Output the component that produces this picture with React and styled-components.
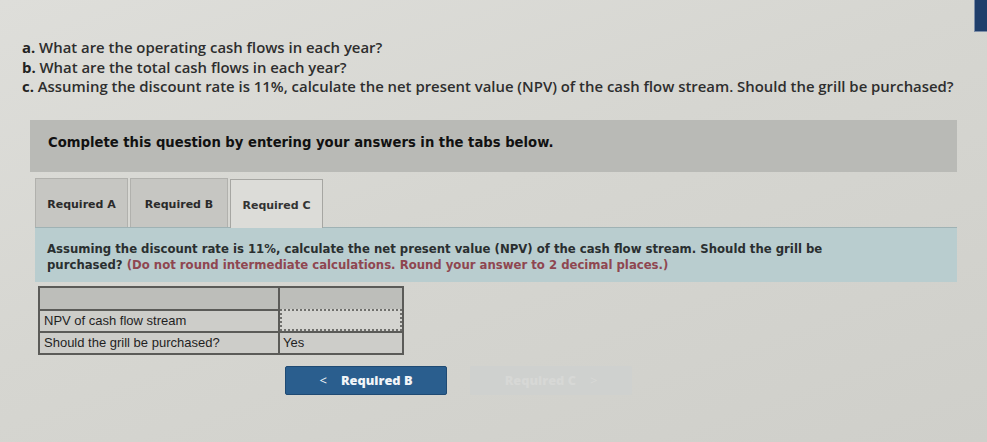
import React from 'react'
import styled, { createGlobalStyle } from 'styled-components'

const GlobalStyle = createGlobalStyle`
  html, body {
    margin: 0;
    padding: 0;
  }
  body {
    width: 987px;
    height: 442px;
    overflow: hidden;
    background: linear-gradient(160deg, #dededa 0%, #d6d6d1 45%, #cfcfca 100%);
  }
`;

const Page = styled.div`
  position: relative;
  width: 987px;
  height: 442px;
  padding: 38px 0 0 0;
  box-sizing: border-box;
  display: flex;
  flex-direction: column;
`;

const Questions = styled.div`
  padding-left: 22px;
  font-family: 'Open Sans', sans-serif;
  font-weight: 600;
  font-size: 14.9px;
  line-height: 19.5px;
  color: #2e2e2e;
`;

const Question = styled.div`
  white-space: nowrap;
`;

const Letter = styled.span`
  font-weight: 700;
  color: #222;
`;

const Banner = styled.div`
  margin: 23px 0 0 30px;
  width: 927px;
  height: 52px;
  box-sizing: border-box;
  padding: 15px 0 0 18px;
  background: #b9bab6;
  font-family: 'DejaVu Sans', Verdana, sans-serif;
  font-weight: bold;
  font-size: 13.2px;
  color: #111;
`;

const TabsArea = styled.div`
  margin: 6px 0 0 35px;
  width: 922px;
  display: flex;
  flex-direction: column;
`;

const TabRow = styled.div`
  display: flex;
  gap: 2px;
  align-items: flex-end;
  border-bottom: 1px solid #9fb2b4;
`;

const Tab = styled.div`
  width: ${p => p.w}px;
  height: 49px;
  box-sizing: border-box;
  display: flex;
  align-items: center;
  justify-content: center;
  padding-top: 4px;
  font-family: 'DejaVu Sans', Verdana, sans-serif;
  font-size: 11px;
  font-weight: bold;
  color: ${p => (p.active ? '#333' : '#2a2a2a')};
  background: ${p => (p.active ? '#dcdcd8' : '#c6c6c2')};
  border: 1px solid ${p => (p.active ? '#a6a6a2' : '#b1b1ad')};
  border-bottom: none;
  margin-bottom: ${p => (p.active ? '-1px' : '0')};
`;

const Panel = styled.div`
  height: 54px;
  box-sizing: border-box;
  padding: 13px 0 0 12px;
  background: #b9cdcf;
  font-family: 'DejaVu Sans', Verdana, sans-serif;
  font-size: 11.7px;
  font-weight: 600;
  line-height: 16.5px;
  color: #2a2f30;
`;

const Hint = styled.span`
  color: #8f4650;
`;

const AnswerTable = styled.div`
  margin: 4px 0 0 38px;
  width: 366px;
  display: grid;
  grid-template-columns: 240px 1fr;
  border: 2px solid #5b5b58;
  box-sizing: border-box;
  font-family: 'Liberation Sans', Arial, sans-serif;
  font-size: 13px;
  color: #1f1f1f;
`;

const Cell = styled.div`
  height: ${p => (p.head ? 21 : 22)}px;
  box-sizing: border-box;
  display: flex;
  align-items: center;
  padding-left: ${p => (p.input ? 3 : 4)}px;
  background: ${p => (p.head ? '#bdbeba' : '#cdcdc9')};
  border-right: ${p => (p.left ? '2px solid #5b5b58' : 'none')};
  border-top: ${p => (p.first ? 'none' : '2px solid #5b5b58')};
`;

const InputCell = styled(Cell)`
  border: 2px dotted #6f6f6c;
  background: #d4d4d0;
`;

const NavRow = styled.div`
  margin: 11px 0 0 285px;
  display: flex;
  gap: 23px;
`;

const NavButton = styled.div`
  width: 162px;
  height: 29px;
  box-sizing: border-box;
  display: flex;
  align-items: center;
  justify-content: center;
  gap: 14px;
  border-radius: 2px;
  font-family: 'Open Sans', sans-serif;
  font-weight: 800;
  font-size: 12.8px;
  color: ${p => (p.disabled ? '#d7d8d6' : '#f2f5f8')};
  background: ${p => (p.disabled ? '#cfd1cf' : '#2a5e8e')};
  border: 1px solid ${p => (p.disabled ? '#cfd1cf' : '#1f4a73')};
`;

const Chevron = styled.span`
  font-size: 13px;
  font-weight: 400;
`;

const CornerTab = styled.div`
  position: absolute;
  top: 0;
  right: 0;
  width: 12px;
  height: 31px;
  background: #1f3e6b;
  border-left: 1px solid #7d8ea8;
  border-bottom: 1px solid #7d8ea8;
`;

export default function App() {
  return (
    <>
      <GlobalStyle />
      <Page>
        <CornerTab />
        <Questions>
          <Question><Letter>a.</Letter> What are the operating cash flows in each year?</Question>
          <Question><Letter>b.</Letter> What are the total cash flows in each year?</Question>
          <Question><Letter>c.</Letter> Assuming the discount rate is 11%, calculate the net present value (NPV) of the cash flow stream. Should the grill be purchased?</Question>
        </Questions>

        <Banner>Complete this question by entering your answers in the tabs below.</Banner>

        <TabsArea>
          <TabRow>
            <Tab w={93}>Required A</Tab>
            <Tab w={98}>Required B</Tab>
            <Tab w={93} active>Required C</Tab>
          </TabRow>
          <Panel>
            Assuming the discount rate is 11%, calculate the net present value (NPV) of the cash flow stream. Should the grill be
            <br />
            purchased? <Hint>(Do not round intermediate calculations. Round your answer to 2 decimal places.)</Hint>
          </Panel>
        </TabsArea>

        <AnswerTable>
          <Cell head left first />
          <Cell head first />
          <Cell left>NPV of cash flow stream</Cell>
          <InputCell input />
          <Cell left>Should the grill be purchased?</Cell>
          <Cell input>Yes</Cell>
        </AnswerTable>

        <NavRow>
          <NavButton><Chevron>&lt;</Chevron>Required B</NavButton>
          <NavButton disabled>Required C<Chevron>&gt;</Chevron></NavButton>
        </NavRow>
      </Page>
    </>
  )
}
